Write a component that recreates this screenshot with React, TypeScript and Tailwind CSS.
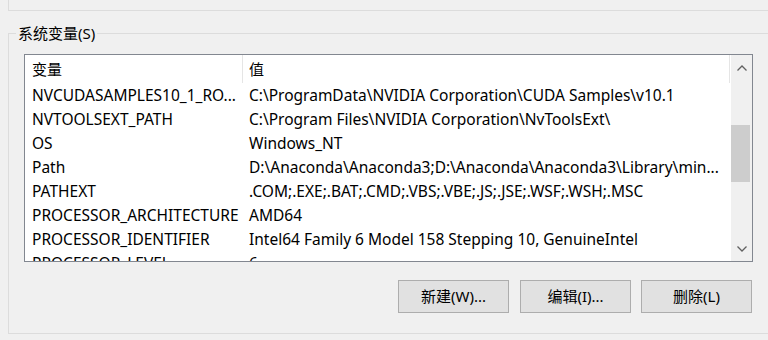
import React from "react";

const rows: [string, string][] = [
  ["NVCUDASAMPLES10_1_RO...", "C:\\ProgramData\\NVIDIA Corporation\\CUDA Samples\\v10.1"],
  ["NVTOOLSEXT_PATH", "C:\\Program Files\\NVIDIA Corporation\\NvToolsExt\\"],
  ["OS", "Windows_NT"],
  ["Path", "D:\\Anaconda\\Anaconda3;D:\\Anaconda\\Anaconda3\\Library\\min..."],
  ["PATHEXT", ".COM;.EXE;.BAT;.CMD;.VBS;.VBE;.JS;.JSE;.WSF;.WSH;.MSC"],
  ["PROCESSOR_ARCHITECTURE", "AMD64"],
  ["PROCESSOR_IDENTIFIER", "Intel64 Family 6 Model 158 Stepping 10, GenuineIntel"],
  ["PROCESSOR_LEVEL", "6"],
];

function Btn({ label }: { label: string }) {
  return (
    <button className="w-[111px] h-[33px] border border-[#adadad] bg-[#e1e1e1] text-black text-[15px] leading-none flex items-center justify-center">
      {label}
    </button>
  );
}

export default function App() {
  return (
    <div
      className="w-[768px] h-[340px] bg-[#f0f0f0] overflow-hidden text-black"
      style={{ fontFamily: '"Noto Sans", "Noto Sans CJK SC", sans-serif' }}
    >
      <div className="ml-[8px] w-[800px] h-[11px] border-l border-b border-[#dcdcdc]" />
      <fieldset className="ml-[8px] mt-[12px] w-[800px] h-[311px] border border-[#dcdcdc] p-0">
        <legend className="ml-[7px] px-[2px] text-[15px] leading-[20px]">系统变量(S)</legend>
        <div className="ml-[15px] mt-[11px] w-[729px] h-[208px] border border-[#828790] bg-white flex overflow-hidden">
          <div className="w-[706px] flex flex-col text-[15.5px]">
            <div className="h-[28px] flex shrink-0 text-[15px]">
              <div className="w-[218px] border-r border-[#e5e5e5] pl-[7px] flex items-center">变量</div>
              <div className="w-[487px] border-r border-[#e5e5e5] pl-[6px] flex items-center">值</div>
            </div>
            {rows.map(([k, v]) => (
              <div key={k} className="h-[24px] pt-[2px] flex shrink-0 items-center whitespace-nowrap">
                <div className="w-[218px] pl-[7px]">{k}</div>
                <div className="pl-[6px]">{v}</div>
              </div>
            ))}
          </div>
          <div className="w-[21px] bg-[#f0f0f0] flex flex-col shrink-0">
            <div className="h-[25px] flex items-center justify-center">
              <svg width="10" height="6" viewBox="0 0 10 6">
                <polyline points="0.5,5.5 5,1 9.5,5.5" fill="none" stroke="#606060" strokeWidth="1.3" />
              </svg>
            </div>
            <div className="h-[45px]" />
            <div className="h-[57px] w-[19px] bg-[#cdcdcd]" />
            <div className="flex-1" />
            <div className="h-[25px] flex items-center justify-center">
              <svg width="10" height="6" viewBox="0 0 10 6">
                <polyline points="0.5,0.5 5,5 9.5,0.5" fill="none" stroke="#606060" strokeWidth="1.3" />
              </svg>
            </div>
          </div>
        </div>
        <div className="ml-[389px] mt-[18px] flex gap-[11px]">
          <Btn label="新建(W)..." />
          <Btn label="编辑(I)..." />
          <div className="-ml-px">
            <Btn label="删除(L)" />
          </div>
        </div>
      </fieldset>
    </div>
  );
}
